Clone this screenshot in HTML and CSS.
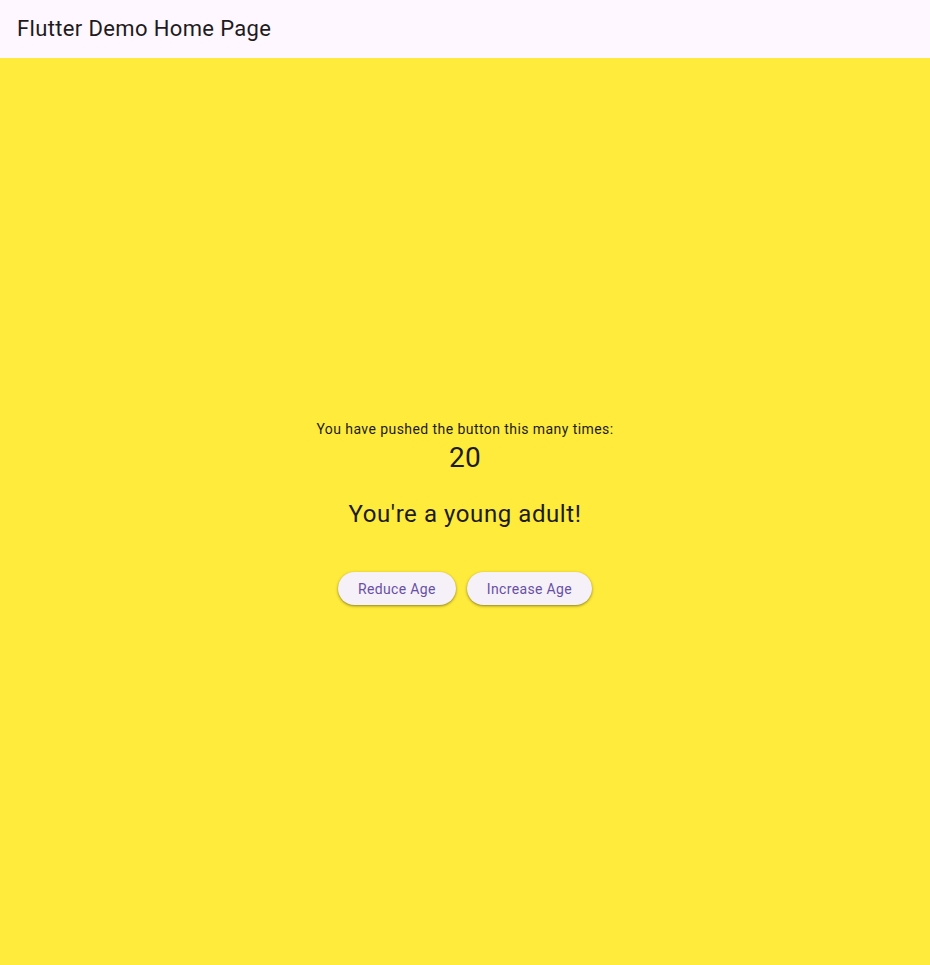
FILE: index.html
```html
<!DOCTYPE html>
<html>
<head>
<meta charset="utf-8">
<link rel="stylesheet" href="styles.css">
</head>
<body>
<header class="appbar"><h1 class="title">Flutter Demo Home Page</h1></header>
<main class="content">
  <div class="column">
    <p class="label">You have pushed the button this many times:</p>
    <p class="count">20</p>
    <p class="message">You're a young adult!</p>
    <div class="buttons">
      <button class="btn">Reduce Age</button>
      <button class="btn">Increase Age</button>
    </div>
  </div>
</main>
</body>
</html>
```
FILE: styles.css
```css
* { box-sizing: border-box; }
html, body { margin: 0; padding: 0; height: 100%; }
body {
  font-family: Roboto, "Noto Sans", sans-serif;
  display: flex;
  flex-direction: column;
  background: #ffeb3b;
  color: #1d1b20;
}
.appbar {
  height: 58px;
  flex: none;
  background: #fef7ff;
  display: flex;
  align-items: center;
  padding: 0 16px 1px 17px;
}
.title {
  margin: 0;
  font-size: 22px;
  font-weight: 400;
  line-height: 28px;
  letter-spacing: 0.36px;
  color: #1d1b20;
}
.content {
  flex: 1;
  display: flex;
  align-items: center;
  justify-content: center;
}
.column {
  display: flex;
  flex-direction: column;
  align-items: center;
}
.label {
  margin: 0;
  font-size: 14px;
  line-height: 20px;
  letter-spacing: 0.43px;
  color: #1d1b20;
}
.count {
  margin: 1px 0 0;
  font-size: 28px;
  line-height: 36px;
  letter-spacing: 0.3px;
}
.message {
  margin: 22px 0 0;
  font-size: 24px;
  line-height: 32px;
  letter-spacing: 0.57px;
}
.buttons {
  margin-top: 42px;
  display: flex;
  gap: 11px;
}
.btn {
  height: 33px;
  padding: 1px 20px 0;
  border: none;
  border-radius: 17px;
  background: #f6f1f9;
  color: #6750a4;
  font-family: Roboto, sans-serif;
  font-size: 14px;
  font-weight: 400;
  letter-spacing: 0.35px;
  box-shadow: 0 1px 2px rgba(0,0,0,0.3), 0 1px 3px 1px rgba(0,0,0,0.12);
}
```
